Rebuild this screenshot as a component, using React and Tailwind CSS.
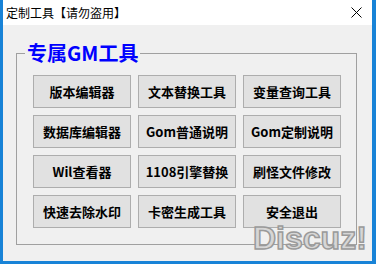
const tools = [
  "版本编辑器",
  "文本替换工具",
  "变量查询工具",
  "数据库编辑器",
  "Gom普通说明",
  "Gom定制说明",
  "Wil查看器",
  "1108引擎替换",
  "刷怪文件修改",
  "快速去除水印",
  "卡密生成工具",
  "安全退出",
];

const cjk = { fontFamily: '"Noto Sans CJK SC", "Noto Sans", sans-serif' };

export default function App() {
  return (
    <div
      className="relative w-[376px] h-[264px] bg-[#1883d7] pl-[3px] pr-[4px] pb-[3px] flex flex-col"
      style={cjk}
    >
      {/* Title bar */}
      <div className="h-[25px] bg-white flex items-center justify-between pl-[3px] pr-[10px]">
        <span className="text-[12px] leading-none text-black">定制工具【请勿盗用】</span>
        <svg width="11" height="11" viewBox="0 0 11 11">
          <path d="M0.5 0.5 L10.5 10.5 M10.5 0.5 L0.5 10.5" stroke="#000" strokeWidth="1" />
        </svg>
      </div>

      {/* Content */}
      <div className="flex-1 bg-[#f0f0f0] pt-[28px] pl-[13px] pr-[15px] pb-[16px]">
        <div className="relative h-full border border-[#a0a0a0] pl-[16px] pt-[21px]">
          <span className="absolute -top-[15px] left-[8px] px-[2px] bg-[#f0f0f0] text-[20px] leading-[28px] font-bold text-[#0000ff]">
            专属GM工具
          </span>
          <div className="grid grid-cols-[98px_98px_98px] gap-x-[7px] gap-y-[7px]">
            {tools.map((t) => (
              <button
                key={t}
                className="h-[33px] bg-[#e1e1e1] border border-[#adadad] text-[13px] font-bold text-black flex items-center justify-center"
              >
                {t}
              </button>
            ))}
          </div>
        </div>
      </div>

      {/* Watermark */}
      <span
        className="absolute left-[253px] top-[220px] text-[32px] leading-[36px] font-bold text-[#d6d6d6] pointer-events-none"
        style={{
          fontFamily: '"Liberation Sans", sans-serif',
          WebkitTextStroke: "1.5px #9a9a9a",
        }}
      >
        Discuz!
      </span>
    </div>
  );
}
